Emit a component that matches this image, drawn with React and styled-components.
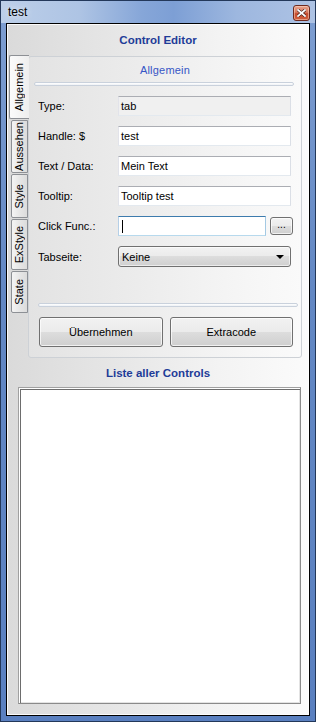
import React from 'react';
import styled, { createGlobalStyle } from 'styled-components';

const GlobalStyle = createGlobalStyle`
  html, body {
    margin: 0;
    padding: 0;
    background: #ffffff;
  }
  * {
    box-sizing: border-box;
  }
`;

const Window = styled.div`
  width: 316px;
  height: 722px;
  border: 1px solid #23385a;
  background: linear-gradient(180deg, #7f9fd2 0%, #6388c4 40%, #5a80c0 100%);
  display: flex;
  flex-direction: column;
  font-family: 'Liberation Sans', Arial, sans-serif;
  font-size: 11px;
  color: #000;
`;

const TitleBar = styled.div`
  height: 22px;
  flex: none;
  display: flex;
  align-items: center;
  justify-content: space-between;
  padding: 0 5px 0 7px;
  background: linear-gradient(
    90deg,
    #bccfe9 0%,
    #aec4e4 25%,
    #86a6d8 45%,
    #7d9fd5 55%,
    #9db7df 75%,
    #aec3e4 100%
  );
`;

const Caption = styled.span`
  font-size: 12px;
  color: #000;
  text-shadow: 0 0 6px rgba(255, 255, 255, 0.9);
`;

const CloseBtn = styled.div`
  width: 17px;
  height: 16px;
  margin-top: 1px;
  border: 1px solid #6e2a1f;
  border-radius: 3px;
  background: linear-gradient(180deg, #e9a590 0%, #d8775c 45%, #c44a2c 55%, #d0603e 100%);
  box-shadow: inset 0 0 0 1px rgba(255, 220, 200, 0.5);
  display: flex;
  align-items: center;
  justify-content: center;
`;

const Client = styled.div`
  flex: 1;
  margin: 0 5px 5px 5px;
  border: 1px solid #000;
  box-shadow: inset 0 0 0 1px rgba(255, 255, 255, 0.85);
  background: linear-gradient(90deg, #dadada 0%, #e6e6e6 35%, #f3f3f3 70%, #fbfbfb 100%);
  display: flex;
  flex-direction: column;
  padding-top: 8px;
`;

const Heading = styled.div`
  height: 16px;
  line-height: 16px;
  text-align: center;
  font-weight: bold;
  font-size: 11.5px;
  color: #1e3c98;
  margin-top: ${(p) => p.$mt || 0}px;
`;

const TabControl = styled.div`
  display: flex;
  align-items: flex-start;
  margin: 7px 7px 0 2px;
`;

const TabStrip = styled.div`
  width: 19px;
  flex: none;
  display: flex;
  flex-direction: column;
  gap: 1px;
  position: relative;
  z-index: 1;
`;

const Tab = styled.div`
  height: ${(p) => p.$h}px;
  margin-left: ${(p) => (p.$active ? 0 : 2)}px;
  margin-right: ${(p) => (p.$active ? -1 : 0)}px;
  border: 1px solid #8d9095;
  border-right: ${(p) => (p.$active ? 'none' : '1px solid #8d9095')};
  border-radius: 2px 0 0 2px;
  background: ${(p) =>
    p.$active
      ? 'linear-gradient(90deg, #fbfbfb 0%, #eeeeee 100%)'
      : 'linear-gradient(90deg, #f4f4f4 0%, #e5e5e5 55%, #dcdcdc 100%)'};
  display: flex;
  align-items: center;
  justify-content: center;
`;

const TabLabel = styled.span`
  writing-mode: vertical-rl;
  transform: rotate(180deg);
  font-size: 11px;
  line-height: 13px;
  white-space: nowrap;
  color: #000;
`;

const Panel = styled.div`
  flex: 1;
  margin-top: 1px;
  border: 1px solid #cdd1d6;
  border-radius: 3px;
  background: linear-gradient(90deg, #e3e3e3 0%, #ececec 40%, #f6f6f6 80%, #fafafa 100%);
  display: flex;
  flex-direction: column;
  padding-bottom: 10px;
`;

const PanelTitle = styled.div`
  margin-top: 5px;
  height: 16px;
  line-height: 16px;
  text-align: center;
  color: #3656c6;
  font-size: 11px;
  letter-spacing: 0.2px;
`;

const Groove = styled.div`
  height: 4px;
  margin: ${(p) => p.$margin};
  border: 1px solid #c9d1dc;
  border-radius: 3px;
  background: linear-gradient(180deg, #ffffff 0%, #eef1f5 100%);
`;

const Rows = styled.div`
  margin-top: 10px;
  padding: 0 10px 0 9px;
  display: flex;
  flex-direction: column;
  gap: 10px;
`;

const Row = styled.div`
  display: flex;
  align-items: center;
  height: ${(p) => p.$h || 20}px;
`;

const Label = styled.div`
  width: 80px;
  flex: none;
  font-size: 11px;
`;

const Field = styled.div`
  flex: 1;
  height: 20px;
  display: flex;
  align-items: center;
  padding-left: 2px;
  font-size: 11px;
  border: 1px solid;
  border-color: #abadb3 #dbdfe6 #e3e9ef #e2e3ea;
  background: ${(p) => (p.$disabled ? '#f0f0f0' : '#ffffff')};
  ${(p) =>
    p.$focused &&
    `
    border-color: #3d7bad #a4c9e3 #b7d9ed #b5cfe7;
  `}
`;

const Caret = styled.span`
  display: inline-block;
  width: 1px;
  height: 13px;
  margin-left: 1px;
  background: #000;
`;

const SmallBtn = styled.div`
  width: 23px;
  height: 18px;
  margin-left: 4px;
  margin-right: -2px;
  border: 1px solid #707070;
  border-radius: 3px;
  background: linear-gradient(180deg, #f2f2f2 0%, #ebebeb 50%, #dddddd 50%, #cfcfcf 100%);
  box-shadow: inset 0 0 0 1px rgba(255, 255, 255, 0.7);
  display: flex;
  align-items: center;
  justify-content: center;
  font-size: 10px;
  line-height: 10px;
  padding-bottom: 2px;
`;

const Select = styled.div`
  flex: 1;
  height: 21px;
  border: 1px solid #707070;
  border-radius: 3px;
  background: linear-gradient(180deg, #f2f2f2 0%, #ebebeb 50%, #dddddd 50%, #cfcfcf 100%);
  box-shadow: inset 0 0 0 1px rgba(255, 255, 255, 0.6);
  display: flex;
  align-items: center;
  justify-content: space-between;
  padding: 0 6px 0 3px;
  font-size: 11px;
`;

const Arrow = styled.span`
  width: 0;
  height: 0;
  border-left: 4px solid transparent;
  border-right: 4px solid transparent;
  border-top: 4px solid #000;
`;

const ButtonRow = styled.div`
  margin-top: 10px;
  padding: 0 8px 0 10px;
  display: grid;
  grid-template-columns: 1fr 1fr;
  gap: 7px;
`;

const Button = styled.div`
  height: 30px;
  border: 1px solid #707070;
  border-radius: 3px;
  background: linear-gradient(180deg, #f2f2f2 0%, #ebebeb 50%, #dddddd 50%, #cfcfcf 100%);
  box-shadow: inset 0 0 0 1px rgba(255, 255, 255, 0.7);
  display: flex;
  align-items: center;
  justify-content: center;
  font-size: 11px;
`;

const ListBox = styled.div`
  flex: 1;
  margin: 6px 8px 11px 11px;
  background: #fff;
  border: 1px solid;
  border-color: #a0a0a0 #8a8a8a #8a8a8a #a0a0a0;
  box-shadow: inset 1px 1px 0 #fff, inset 2px 2px 0 #6d6d6d, inset -1px -1px 0 #e3e3e3;
`;

const tabs = [
  { label: 'Allgemein', h: 64, active: true },
  { label: 'Aussehen', h: 53 },
  { label: 'Style', h: 44 },
  { label: 'ExStyle', h: 51 },
  { label: 'State', h: 42 },
];

const rows = [
  { label: 'Type:', value: 'tab', disabled: true },
  { label: 'Handle: $', value: 'test' },
  { label: 'Text / Data:', value: 'Mein Text' },
  { label: 'Tooltip:', value: 'Tooltip test' },
];

export default function App() {
  return (
    <>
      <GlobalStyle />
      <Window>
        <TitleBar>
          <Caption>test</Caption>
          <CloseBtn>
            <svg width="9" height="8" viewBox="0 0 9 8">
              <path d="M1 1 L8 7 M8 1 L1 7" stroke="#3a1a14" strokeWidth="3" strokeLinecap="square" />
              <path d="M1 1 L8 7 M8 1 L1 7" stroke="#ffffff" strokeWidth="1.8" strokeLinecap="square" />
            </svg>
          </CloseBtn>
        </TitleBar>
        <Client>
          <Heading>Control Editor</Heading>
          <TabControl>
            <TabStrip>
              {tabs.map((t) => (
                <Tab key={t.label} $h={t.h} $active={t.active}>
                  <TabLabel>{t.label}</TabLabel>
                </Tab>
              ))}
            </TabStrip>
            <Panel>
              <PanelTitle>Allgemein</PanelTitle>
              <Groove $margin="4px 7px 0 5px" />
              <Rows>
                {rows.map((r) => (
                  <Row key={r.label}>
                    <Label>{r.label}</Label>
                    <Field $disabled={r.disabled}>{r.value}</Field>
                  </Row>
                ))}
                <Row>
                  <Label>Click Func.:</Label>
                  <Field $focused>
                    <Caret />
                  </Field>
                  <SmallBtn>...</SmallBtn>
                </Row>
                <Row $h={21}>
                  <Label>Tabseite:</Label>
                  <Select>
                    <span>Keine</span>
                    <Arrow />
                  </Select>
                </Row>
              </Rows>
              <Groove $margin="36px 3px 0 9px" />
              <ButtonRow>
                <Button>Übernehmen</Button>
                <Button>Extracode</Button>
              </ButtonRow>
            </Panel>
          </TabControl>
          <Heading $mt={7}>Liste aller Controls</Heading>
          <ListBox />
        </Client>
      </Window>
    </>
  );
}
